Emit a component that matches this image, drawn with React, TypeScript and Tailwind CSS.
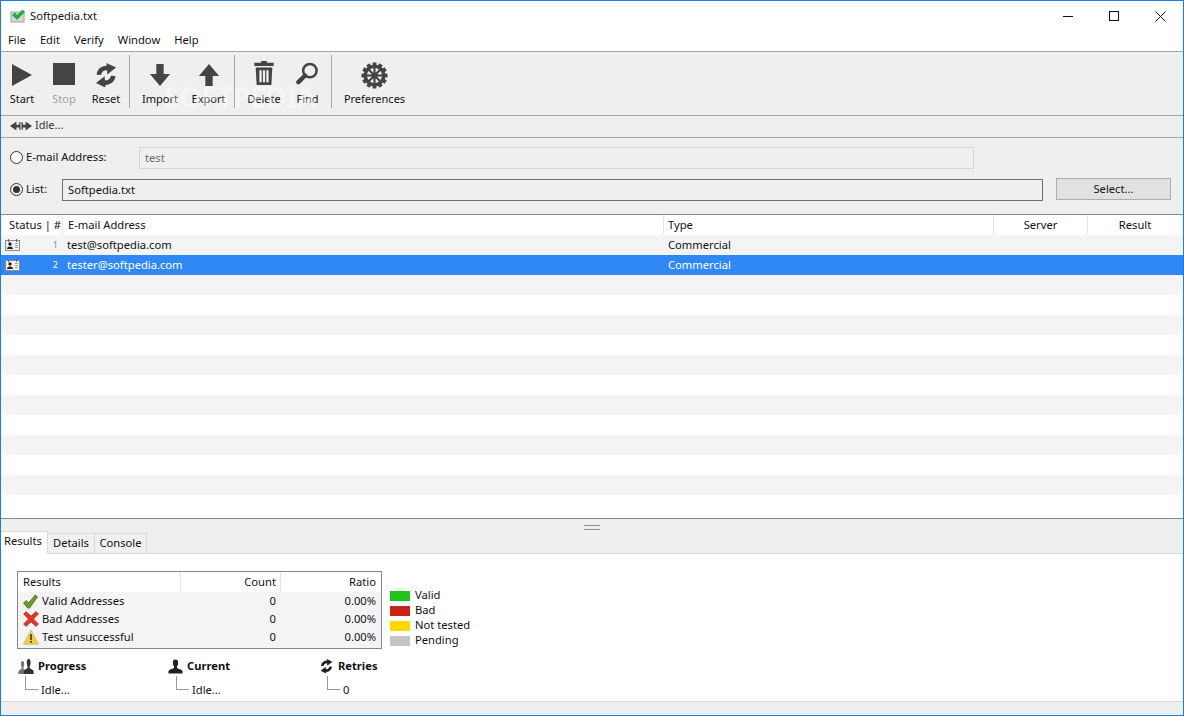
import React from "react";

const Font = '[font-family:"Noto_Sans","Open_Sans",sans-serif]';

function Sync({ s = 22, c = "#444" }: { s?: number; c?: string }) {
  return (
    <svg width={s} height={s * 1.12} viewBox="0 0 24 27">
      <path d="M4.2 13 A8 8 0 0 1 15 6" fill="none" stroke={c} strokeWidth="5" />
      <path d="M12.5 0 L23 5 L13.5 12.5 Z" fill={c} />
      <path d="M19.8 14 A8 8 0 0 1 9 21" fill="none" stroke={c} strokeWidth="5" />
      <path d="M11.5 27 L1 22 L10.5 14.5 Z" fill={c} />
    </svg>
  );
}
function Check({ s = 14 }: { s?: number }) {
  return <svg width={s} height={s} viewBox="0 0 16 16"><path d="M0.5 9.5 L3.5 7 L6 9.5 L13 1 L15.5 3 L7 15 L5 15 Z" fill="#6d9a26" stroke="#3f5f14" strokeWidth="0.8" /></svg>;
}
function Cross() {
  return <svg width="16" height="16" viewBox="0 0 16 16"><path d="M0.5 3 L3 0.5 L8 5 L13 0.5 L15.5 3 L10.5 8 L15.5 13 L13 15.5 L8 11 L3 15.5 L0.5 13 L5.5 8 Z" fill="#d8392b" stroke="#a82a1e" strokeWidth="0.6" /></svg>;
}
function Warn() {
  return <svg width="16" height="16" viewBox="0 0 16 16"><path d="M8 1 L15.5 14.5 Q15.5 15.5 14 15.5 L2 15.5 Q0.5 15.5 0.5 14.5 Z" fill="#f3c94a" stroke="#c9c2a8" strokeWidth="0.8" /><rect x="7.1" y="5" width="1.8" height="6" fill="#5a4a20" /><rect x="7.1" y="12" width="1.8" height="1.8" fill="#5a4a20" /></svg>;
}
function Card() {
  return (
    <svg width="15" height="12" viewBox="0 0 15 12">
      <rect x="0.5" y="1.5" width="14" height="10" fill="#f4f4f4" stroke="#8a8a8a" />
      <rect x="3" y="0" width="1" height="3" fill="#666" /><rect x="11" y="0" width="1" height="3" fill="#666" />
      <circle cx="5" cy="5" r="1.7" fill="#222" /><path d="M2 10 Q2 7.4 5 7.4 Q8 7.4 8 10 Z" fill="#222" />
      <path d="M10 4.5h3M10 6.5h3M10 8.5h3" stroke="#9a9a9a" />
    </svg>
  );
}
const PERSON = "M8 0 C10.5 0 11 2 10.8 4 C10.6 6 10 7 9.6 7.6 L9.6 9 C11 10 15 10.5 15.5 12.5 L15.5 15 L0.5 15 L0.5 12.5 C1 10.5 5 10 6.4 9 L6.4 7.6 C6 7 5.4 6 5.2 4 C5 2 5.5 0 8 0 Z";
function Person({ c = "#222" }: { c?: string }) {
  return <svg width="15" height="15" viewBox="0 0 16 15"><path d={PERSON} fill={c} /></svg>;
}
function People() {
  return (
    <svg width="16" height="15" viewBox="0 0 24 15" preserveAspectRatio="none">
      <path d={PERSON} fill="#777" transform="translate(0 2) scale(0.85 0.87)" />
      <path d={PERSON} fill="#333" transform="translate(8 0)" />
    </svg>
  );
}
function Gear() {
  const teeth = Array.from({ length: 12 }, (_, i) => i * 30);
  return (
    <svg width="27" height="27" viewBox="0 0 28 28">
      {teeth.map((a) => <rect key={a} x="12" y="0.5" width="4" height="5" fill="#444" transform={`rotate(${a} 14 14)`} />)}
      <circle cx="14" cy="14" r="9.5" fill="none" stroke="#444" strokeWidth="3.4" />
      <circle cx="14" cy="14" r="3.2" fill="#444" />
      {[0, 45, 90, 135].map((a) => <rect key={a} x="12.9" y="5" width="2.2" height="18" fill="#444" transform={`rotate(${a} 14 14)`} />)}
    </svg>
  );
}

function Tool({ label, icon, width, disabled }: { label: string; icon: React.ReactNode; width: string; disabled?: boolean }) {
  return (
    <div className={`flex flex-col items-center pt-[5px] ${width}`}>
      <div className="h-[30px] flex items-center justify-center">{icon}</div>
      <div className={`mt-px text-[11px] leading-[16px] whitespace-nowrap ${disabled ? "text-[#a0a0a0]" : "text-[#111]"}`}>{label}</div>
    </div>
  );
}
const Sep = () => <div className="w-px h-[53px] bg-[#a8a8a8]" />;

const ROWS = Array.from({ length: 14 });

export default function App() {
  return (
    <div className={`relative w-[1184px] h-[716px] overflow-hidden flex flex-col bg-white border border-[#1b7fd6] text-[11.2px] text-[#111] ${Font}`}>
      {/* title */}
      <div className="h-[30px] flex items-center bg-white shrink-0">
        <svg className="ml-[9px]" width="16" height="16" viewBox="0 0 16 16">
          <rect x="1" y="4" width="13" height="10" fill="#d8d8d8" stroke="#a0a0a0" />
          <path d="M2 7 L5 4.5 L7 7 L12.5 1.5 L15 4 L7 12 Z" fill="#1fb141" />
        </svg>
        <span className="ml-[4px]">Softpedia.txt</span>
        <div className="ml-auto flex items-center text-[#111]">
          <div className="w-[46px] flex justify-center"><div className="w-[10px] h-px bg-[#111]" /></div>
          <div className="w-[46px] flex justify-center"><div className="w-[10px] h-[10px] border border-[#111]" /></div>
          <div className="w-[46px] flex justify-center">
            <svg width="11" height="11" viewBox="0 0 11 11"><path d="M0.5 0.5L10.5 10.5M10.5 0.5L0.5 10.5" stroke="#111" /></svg>
          </div>
        </div>
      </div>
      {/* menu */}
      <div className="h-[20px] flex items-center gap-[14px] pl-[7px] pb-[2px] bg-white shrink-0">
        <span>File</span><span>Edit</span><span>Verify</span><span>Window</span><span>Help</span>
      </div>
      {/* toolbar */}
      <div className="h-[65px] bg-[#efefef] border-y border-[#a4a4a4] shrink-0 flex pt-[3px] relative">
        <Tool label="Start" width="w-[42px]" icon={<svg width="20" height="24" viewBox="0 0 20 22"><path d="M0 0 L20 11 L0 22 Z" fill="#444" /></svg>} />
        <Tool label="Stop" width="w-[42px]" disabled icon={<div className="w-[22px] h-[22px] bg-[#444] -mt-[3px]" />} />
        <Tool label="Reset" width="w-[42px]" icon={<Sync />} />
        <div className="w-[2px]" /><Sep />
        <Tool label="Import" width="w-[60px]" icon={<svg width="22" height="22" viewBox="0 0 22 24"><path d="M7 0 H15 V11 H22 L11 24 L0 11 H7 Z" fill="#444" /></svg>} />
        <Tool label="Export" width="w-[37px]" icon={<svg width="22" height="22" viewBox="0 0 22 24"><path d="M7 24 H15 V13 H22 L11 0 L0 13 H7 Z" fill="#444" /></svg>} />
        <div className="w-[7px]" /><Sep />
        <Tool label="Delete" width="w-[58px]" icon={
          <svg className="-mt-[4px]" width="22" height="24" viewBox="0 0 22 26"><path d="M8 0 H14 V2 H21.5 V5.5 H0.5 V2 H8 Z" fill="#444" /><path d="M2 7 H20 L19 26 H3 Z M6 10 V23 H8.5 V10 Z M9.8 10 V23 H12.2 V10 Z M13.5 10 V23 H16 V10 Z" fill="#444" fillRule="evenodd" /></svg>} />
        <Tool label="Find" width="w-[29px]" icon={
          <svg className="-mt-[3px]" width="23" height="23" viewBox="0 0 23 24"><circle cx="14" cy="9" r="7" fill="none" stroke="#444" strokeWidth="2.6" /><path d="M9 14 L2 21" stroke="#444" strokeWidth="4.5" strokeLinecap="round" /></svg>} />
        <div className="w-[9px]" /><Sep />
        <Tool label="Preferences" width="w-[85px]" icon={<Gear />} />
        <div className="absolute left-[163px] top-[29px] text-[29px] leading-[32px] font-bold text-white opacity-40 pointer-events-none tracking-tight">SOFTPEDIA</div>
      </div>
      {/* status */}
      <div className="h-[22px] bg-[#efefef] border-b border-[#a4a4a4] shrink-0 flex items-center pl-[9px] pb-[2px] gap-[3px] text-[#333] text-[11px]">
        <svg width="22" height="10" viewBox="0 0 24 10"><path d="M0 5 L7 0 V3.5 H10 V1 H11.5 V9 H10 V6.5 H7 V10 Z M12.5 1 H14 V3.5 H17 V0 L24 5 L17 10 V6.5 H14 V9 H12.5 Z" fill="#444" /></svg>
        <span>Idle...</span>
      </div>
      {/* form */}
      <div className="h-[76px] bg-[#efefef] shrink-0 flex flex-col">
        <div className="flex items-center h-[22px] mt-[9px]">
          <div className="ml-[9px] mb-[2px] w-[13px] h-[13px] rounded-full border border-[#333] bg-white" />
          <span className="ml-[3px] mb-[2px] w-[113px]">E-mail Address:</span>
          <div className="w-[835px] h-[22px] border border-[#d4d4d4] pl-[5px] flex items-center text-[#6d6d6d]">test</div>
        </div>
        <div className="flex items-center h-[22px] mt-[10px]">
          <div className="ml-[9px] mb-[1px] w-[13px] h-[13px] rounded-full border border-[#333] flex items-center justify-center">
            <div className="w-[7px] h-[7px] rounded-full bg-[#333]" />
          </div>
          <span className="ml-[3px] mb-[2px] w-[36px]">List:</span>
          <div className="w-[981px] h-[22px] border border-[#6f6f6f] pl-[5px] flex items-center">Softpedia.txt</div>
          <div className="ml-[13px] w-[115px] h-[22px] self-start -mt-[1px] bg-[#e1e1e1] border border-[#adadad] flex items-center justify-center">Select...</div>
        </div>
      </div>
      {/* table */}
      <div className="h-[305px] shrink-0 border-y border-[#7f8a96] bg-white overflow-hidden">
        <div className="h-[20px] flex items-center bg-white">
          <div className="w-[62px] pl-[8px] border-r border-[#e5e5e5] h-full flex items-center whitespace-nowrap">Status | #</div>
          <div className="w-[601px] pl-[5px] border-r border-[#e5e5e5] h-full flex items-center">E-mail Address</div>
          <div className="w-[330px] pl-[4px] border-r border-[#e5e5e5] h-full flex items-center">Type</div>
          <div className="w-[94px] border-r border-[#e5e5e5] h-full flex items-center justify-center">Server</div>
          <div className="w-[94px] h-full flex items-center justify-center">Result</div>
        </div>
        {ROWS.map((_, i) => {
          const sel = i === 1;
          const data = i < 2;
          return (
            <div key={i} className={`h-[20px] flex items-center ${sel ? "bg-[#2f88f4] text-white" : i % 2 === 0 ? "bg-[#f4f4f4]" : "bg-white"}`}>
              {data && (
                <>
                  <div className="w-[62px] flex items-center justify-between pl-[4px] pr-[5px]">
                    <Card />
                    <span className={`text-[9px] ${sel ? "text-white" : "text-[#5f8fd0]"}`}>{i + 1}</span>
                  </div>
                  <div className="w-[601px] pl-[4px]">{i === 0 ? "test@softpedia.com" : "tester@softpedia.com"}</div>
                  <div className="pl-[4px]">Commercial</div>
                </>
              )}
            </div>
          );
        })}
      </div>
      {/* tabs bar */}
      <div className="h-[35px] shrink-0 bg-[#efefef] border-b border-[#d9d9d9] relative flex items-end">
        <div className="absolute left-[583px] top-[6px] w-[16px] h-[5px] border-y border-[#8f8f8f]" />
        <div className="w-[47px] h-[23px] -mb-px bg-white border-r border-t border-[#d9d9d9] flex items-center pl-[3px] z-10 pb-[3px]">Results</div>
        <div className="w-[47px] h-[20px] bg-[#f0f0f0] border-r border-t border-[#d9d9d9] flex items-center justify-center">Details</div>
        <div className="w-[52px] h-[20px] bg-[#f0f0f0] border-r border-t border-[#d9d9d9] flex items-center justify-center">Console</div>
      </div>
      {/* results */}
      <div className="flex-1 bg-white flex flex-col pl-[16px] pt-[17px]">
        <div className="flex items-end gap-[8px]">
          <div className="w-[365px] h-[78px] border border-[#7f8a96] shrink-0">
            <div className="h-[20px] flex">
              <div className="w-[163px] border-r border-[#e5e5e5] pl-[5px] flex items-center">Results</div>
              <div className="w-[100px] border-r border-[#e5e5e5] pr-[4px] flex items-center justify-end">Count</div>
              <div className="flex-1 pr-[5px] flex items-center justify-end">Ratio</div>
            </div>
            <div className="bg-[#f4f4f4] h-[56px] flex flex-col">
              {[["Valid Addresses", <Check key="c" s={15} />], ["Bad Addresses", <Cross key="x" />], ["Test unsuccessful", <Warn key="w" />]].map(([t, ic], i) => (
                <div key={i} className="h-[18px] flex items-center">
                  <div className="w-[23px] pl-[5px] flex justify-start">{ic}</div>
                  <div className="w-[140px] pl-[1px]">{t}</div>
                  <div className="w-[100px] pr-[5px] text-right">0</div>
                  <div className="flex-1 pr-[5px] text-right">0.00%</div>
                </div>
              ))}
            </div>
          </div>
          <div className="flex flex-col mb-px">
            {[["Valid", "bg-[#22c41c]"], ["Bad", "bg-[#c92314]"], ["Not tested", "bg-[#ffd800]"], ["Pending", "bg-[#c4c4c4]"]].map(([t, c]) => (
              <div key={t} className="h-[15px] flex items-center gap-[5px]">
                <div className={`w-[20px] h-[10px] ${c}`} /><span>{t}</span>
              </div>
            ))}
          </div>
        </div>
        <div className="flex mt-[9px]">
          {[
            { t: "Progress", v: "Idle...", w: "w-[151px]", gap: "gap-[4px] pl-[1px]", ic: <People /> },
            { t: "Current", v: "Idle...", w: "w-[151px]", gap: "gap-[4px]", ic: <Person /> },
            { t: "Retries", v: "0", w: "w-[100px]", gap: "gap-[5px] pl-[1px]", ic: <Sync s={13} c="#222" /> },
          ].map((b) => (
            <div key={b.t} className={`${b.w} flex flex-col`}>
              <div className={`h-[16px] flex items-center ${b.gap} font-bold`}>
                <div className="flex justify-center">{b.ic}</div><span>{b.t}</span>
              </div>
              <div className="flex mt-[2px] ml-[8px]">
                <div className="w-[13px] h-[14px] border-l border-b border-[#999]" />
                <span className="ml-[3px] mt-[6px] leading-[16px]">{b.v}</span>
              </div>
            </div>
          ))}
        </div>
      </div>
      {/* bottom */}
      <div className="h-[14px] shrink-0 bg-[#efefef] border-t border-[#d9d9d9]" />
    </div>
  );
}
